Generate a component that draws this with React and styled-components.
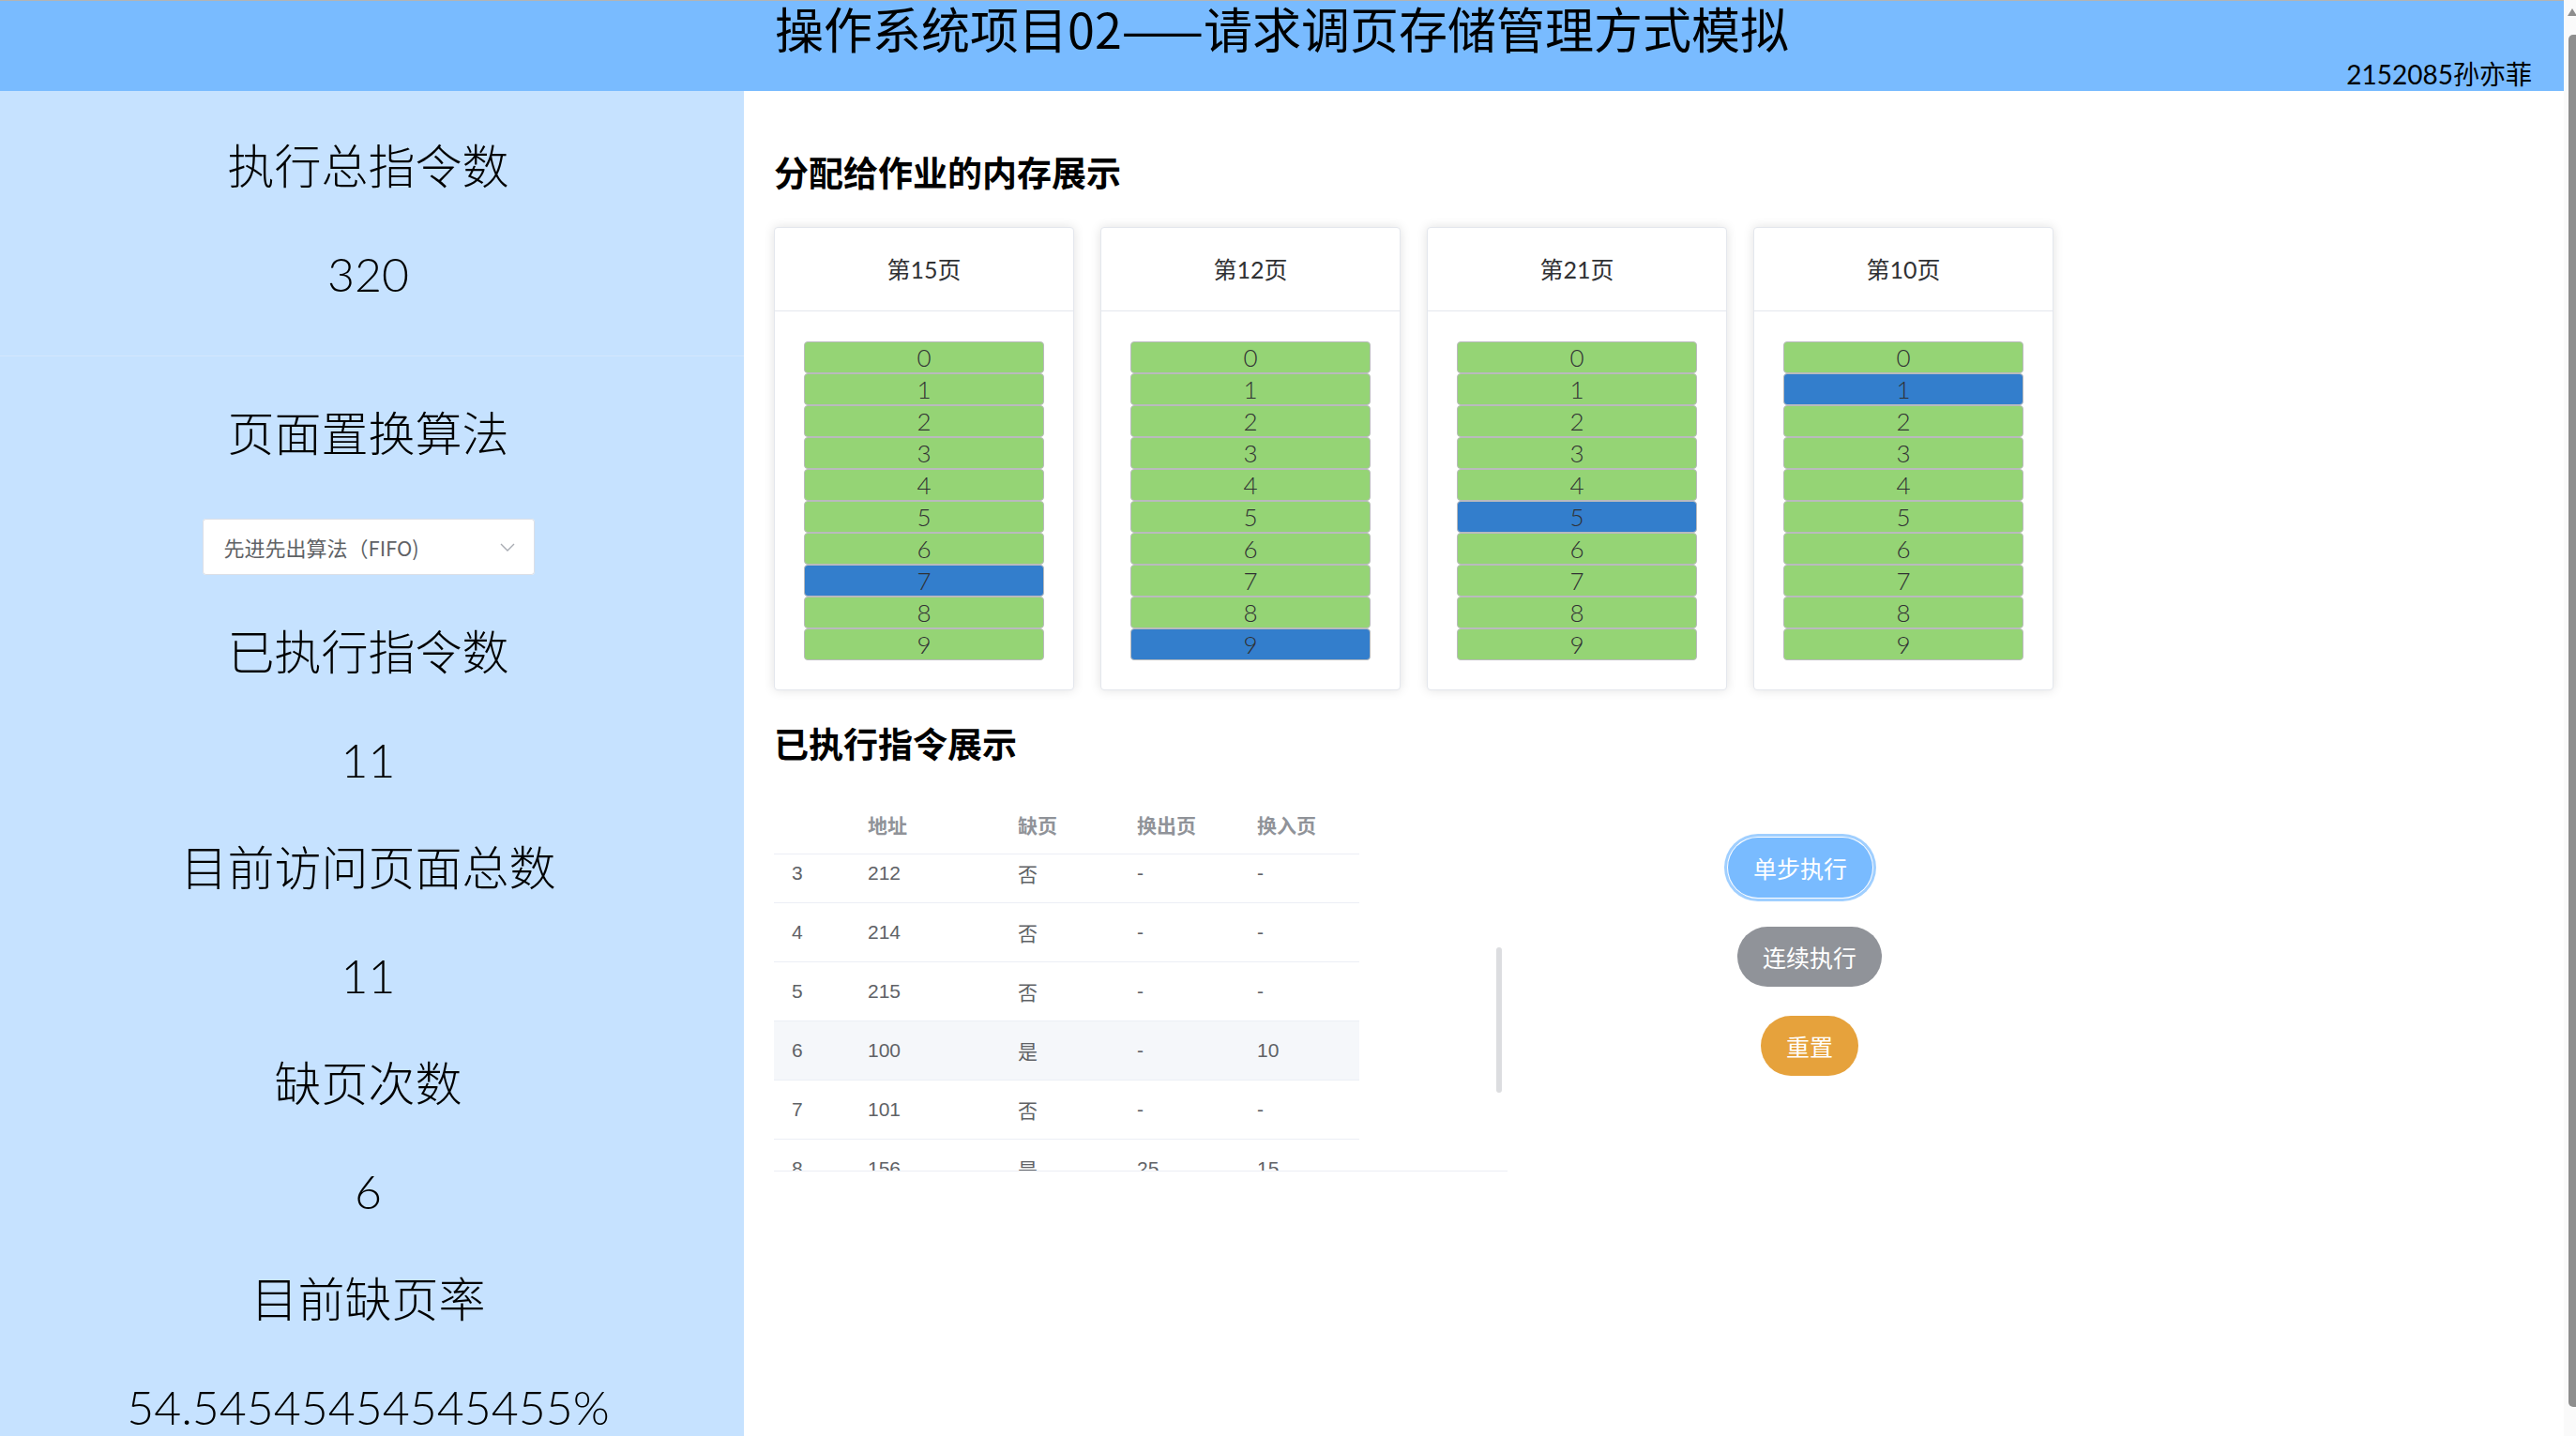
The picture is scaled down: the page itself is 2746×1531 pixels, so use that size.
import React, { useLayoutEffect, useRef } from 'react';
import styled, { createGlobalStyle } from 'styled-components';

const Global = createGlobalStyle`
  html, body { margin: 0; background: #fff; }
  body { font-family: "Noto Sans CJK SC", sans-serif; padding-right: 13px; }
`;

const Header = styled.header`
  height: 96px;
  border-top: 1px solid #b4b4b4;
  background: #79bbff;
  display: flex;
  flex-direction: column;
  color: #000;
`;
const Title = styled.h1`
  margin: 0;
  font-size: 52px;
  font-weight: 400;
  line-height: 58px;
  text-align: center;
`;
const Author = styled.div`
  font-size: 28px;
  line-height: 40px;
  text-align: right;
  padding-right: 34px;
  font-family: Lato, "Noto Sans CJK SC", sans-serif;
`;

const Layout = styled.div`
  display: flex;
  align-items: stretch;
`;
const Side = styled.aside`
  width: 793px;
  flex: none;
  box-sizing: border-box;
  background: #c6e2ff;
  padding: 23px 8px 60px 0;
  display: flex;
  flex-direction: column;
  align-items: center;
  font-family: Lato, "Noto Sans CJK SC", sans-serif;
`;
const Stat = styled.div`
  width: 100%;
  height: 115px;
  line-height: 115px;
  font-size: 50px;
  font-weight: 300;
  color: #000;
  text-align: center;
  white-space: nowrap;
`;
const Divider = styled.div`
  width: calc(100% + 8px);
  margin: 29px -8px 25px 0;
  border-top: 1px solid #d3e7fd;
`;
const SelectWrap = styled.div`
  height: 118px;
  padding-top: 33px;
  box-sizing: border-box;
`;
const SelectBox = styled.div`
  width: 354px;
  height: 60px;
  box-sizing: border-box;
  background: #fff;
  border-radius: 4px;
  box-shadow: 0 0 0 1px #dcdfe6 inset;
  display: flex;
  align-items: center;
  justify-content: space-between;
  padding: 0 20px 0 23px;
  font-family: "Noto Sans CJK SC", sans-serif;
  font-size: 22px;
  color: #606266;
`;

const Main = styled.main`
  flex: 1;
  padding: 64px 0 0 32px;
`;
const SectionTitle = styled.h2`
  margin: ${p => p.$top || 0}px 0 0;
  font-size: 37px;
  line-height: 44px;
  font-weight: 700;
  color: #000;
`;
const Cards = styled.div`
  display: flex;
  gap: 28px;
  margin-top: 37px;
`;
const Card = styled.div`
  width: 320px;
  height: 494px;
  box-sizing: border-box;
  border: 1px solid #e4e7ed;
  border-radius: 4px;
  background: #fff;
  box-shadow: 0 0 12px rgba(0, 0, 0, 0.12);
  overflow: hidden;
`;
const CardHead = styled.div`
  height: 88px;
  line-height: 88px;
  border-bottom: 1px solid #e4e7ed;
  text-align: center;
  font-size: 25px;
  color: #303133;
  font-family: Lato, "Noto Sans CJK SC", sans-serif;
`;
const CardBody = styled.div`
  padding: 32px 31px 0;
  display: flex;
  flex-direction: column;
`;
const Slot = styled.div`
  height: 34px;
  box-sizing: border-box;
  border: 1px solid #b9babd;
  border-radius: 4px;
  background: ${p => (p.$active ? '#337ecc' : '#95d475')};
  text-align: center;
  line-height: 32px;
  font-size: 26px;
  font-weight: 300;
  color: #303133;
  font-family: Lato, sans-serif;
`;

const Bottom = styled.div`
  display: flex;
  margin-top: 33px;
`;
const TableWrap = styled.div`
  position: relative;
  width: 782px;
  flex: none;
  border-bottom: 1px solid #ebeef5;
`;
const Row = styled.div`
  display: grid;
  grid-template-columns: 88px 160px 127px 128px 121px;
  width: 624px;
  height: ${p => (p.$head ? 64 : 63)}px;
  box-sizing: border-box;
  border-bottom: 1px solid #ebeef5;
  align-items: center;
  background: ${p => (p.$hover ? '#f5f7fa' : 'transparent')};
  font-family: "Liberation Sans", "Noto Sans CJK SC", sans-serif;
  font-size: 21px;
  font-weight: ${p => (p.$head ? 700 : 400)};
  color: ${p => (p.$head ? '#909399' : '#606266')};
`;
const Cell = styled.div`
  padding-left: 12px;
  &:first-child { padding-left: 19px; }
`;
const Body = styled.div`
  height: 337px;
  overflow-y: auto;
  scrollbar-width: none;
  &::-webkit-scrollbar { display: none; }
`;
const Thumb = styled.div`
  position: absolute;
  right: 6px;
  top: 163px;
  width: 6px;
  height: 155px;
  border-radius: 3px;
  background: #dcdde0;
`;

const Actions = styled.div`
  width: 644px;
  display: flex;
  flex-direction: column;
  align-items: center;
  gap: 31px;
  padding-top: 46px;
`;
const Btn = styled.button`
  height: 64px;
  padding: 0 27px;
  margin-right: ${p => (p.$focus ? 20 : 0)}px;
  border: 0;
  border-radius: 32px;
  background: ${p => p.$bg};
  color: #fff;
  font-family: "Noto Sans CJK SC", sans-serif;
  font-size: 25px;
  box-shadow: ${p => (p.$focus ? '0 0 0 1px #fff, 0 0 0 4px #a0cfff' : 'none')};
  cursor: pointer;
`;

/* the browser's page scrollbar seen in the screenshot */
const PageScroll = styled.div`
  position: fixed;
  top: 0;
  right: 0;
  bottom: 0;
  width: 13px;
  background: #fafafa;
`;
const PageArrow = styled.div`
  position: absolute;
  top: 9px;
  left: 4px;
  width: 0;
  height: 0;
  border-left: 5px solid transparent;
  border-right: 5px solid transparent;
  border-bottom: 8px solid #8e8e8e;
`;
const PageThumb = styled.div`
  position: absolute;
  top: 37px;
  left: 5px;
  right: 0;
  height: 1463px;
  border-radius: 5px 0 0 5px;
  background: #8e8e8e;
`;

const frames = [
  { page: 15, active: 7 },
  { page: 12, active: 9 },
  { page: 21, active: 5 },
  { page: 10, active: 1 },
];

const records = [
  [0, 253, '是', '-', '25'],
  [1, 129, '是', '-', '12'],
  [2, 211, '是', '-', '21'],
  [3, 212, '否', '-', '-'],
  [4, 214, '否', '-', '-'],
  [5, 215, '否', '-', '-'],
  [6, 100, '是', '-', '10'],
  [7, 101, '否', '-', '-'],
  [8, 156, '是', '25', '15'],
  [9, 157, '否', '-', '-'],
  [10, 157, '否', '-', '-'],
];

function Chevron() {
  return (
    <svg width="18" height="18" viewBox="0 0 18 18" fill="none">
      <path d="M2 6l7 7 7-7" stroke="#a8abb2" strokeWidth="1.4" />
    </svg>
  );
}

export default function App() {
  const bodyRef = useRef(null);
  useLayoutEffect(() => {
    if (bodyRef.current) bodyRef.current.scrollTop = 200;
  }, []);

  return (
    <>
      <Global />
      <Header>
        <Title>操作系统项目02——请求调页存储管理方式模拟</Title>
        <Author>2152085孙亦菲</Author>
      </Header>
      <Layout>
        <Side>
          <Stat>执行总指令数</Stat>
          <Stat>320</Stat>
          <Divider />
          <Stat>页面置换算法</Stat>
          <SelectWrap>
            <SelectBox>
              <span>先进先出算法（FIFO)</span>
              <Chevron />
            </SelectBox>
          </SelectWrap>
          <Stat>已执行指令数</Stat>
          <Stat>11</Stat>
          <Stat>目前访问页面总数</Stat>
          <Stat>11</Stat>
          <Stat>缺页次数</Stat>
          <Stat>6</Stat>
          <Stat>目前缺页率</Stat>
          <Stat>54.54545454545455%</Stat>
        </Side>
        <Main>
          <SectionTitle>分配给作业的内存展示</SectionTitle>
          <Cards>
            {frames.map(f => (
              <Card key={f.page}>
                <CardHead>第{f.page}页</CardHead>
                <CardBody>
                  {Array.from({ length: 10 }, (_, i) => (
                    <Slot key={i} $active={i === f.active}>{i}</Slot>
                  ))}
                </CardBody>
              </Card>
            ))}
          </Cards>
          <SectionTitle $top={34}>已执行指令展示</SectionTitle>
          <Bottom>
            <TableWrap>
              <Row $head>
                <Cell></Cell>
                <Cell>地址</Cell>
                <Cell>缺页</Cell>
                <Cell>换出页</Cell>
                <Cell>换入页</Cell>
              </Row>
              <Body ref={bodyRef}>
                {records.map(r => (
                  <Row key={r[0]} $hover={r[0] === 6}>
                    {r.map((v, i) => (
                      <Cell key={i}>{v}</Cell>
                    ))}
                  </Row>
                ))}
              </Body>
              <Thumb />
            </TableWrap>
            <Actions>
              <Btn $bg="#79bbff" $focus>单步执行</Btn>
              <Btn $bg="#909399">连续执行</Btn>
              <Btn $bg="#e6a23c">重置</Btn>
            </Actions>
          </Bottom>
        </Main>
      </Layout>
      <PageScroll>
        <PageArrow />
        <PageThumb />
      </PageScroll>
    </>
  );
}
